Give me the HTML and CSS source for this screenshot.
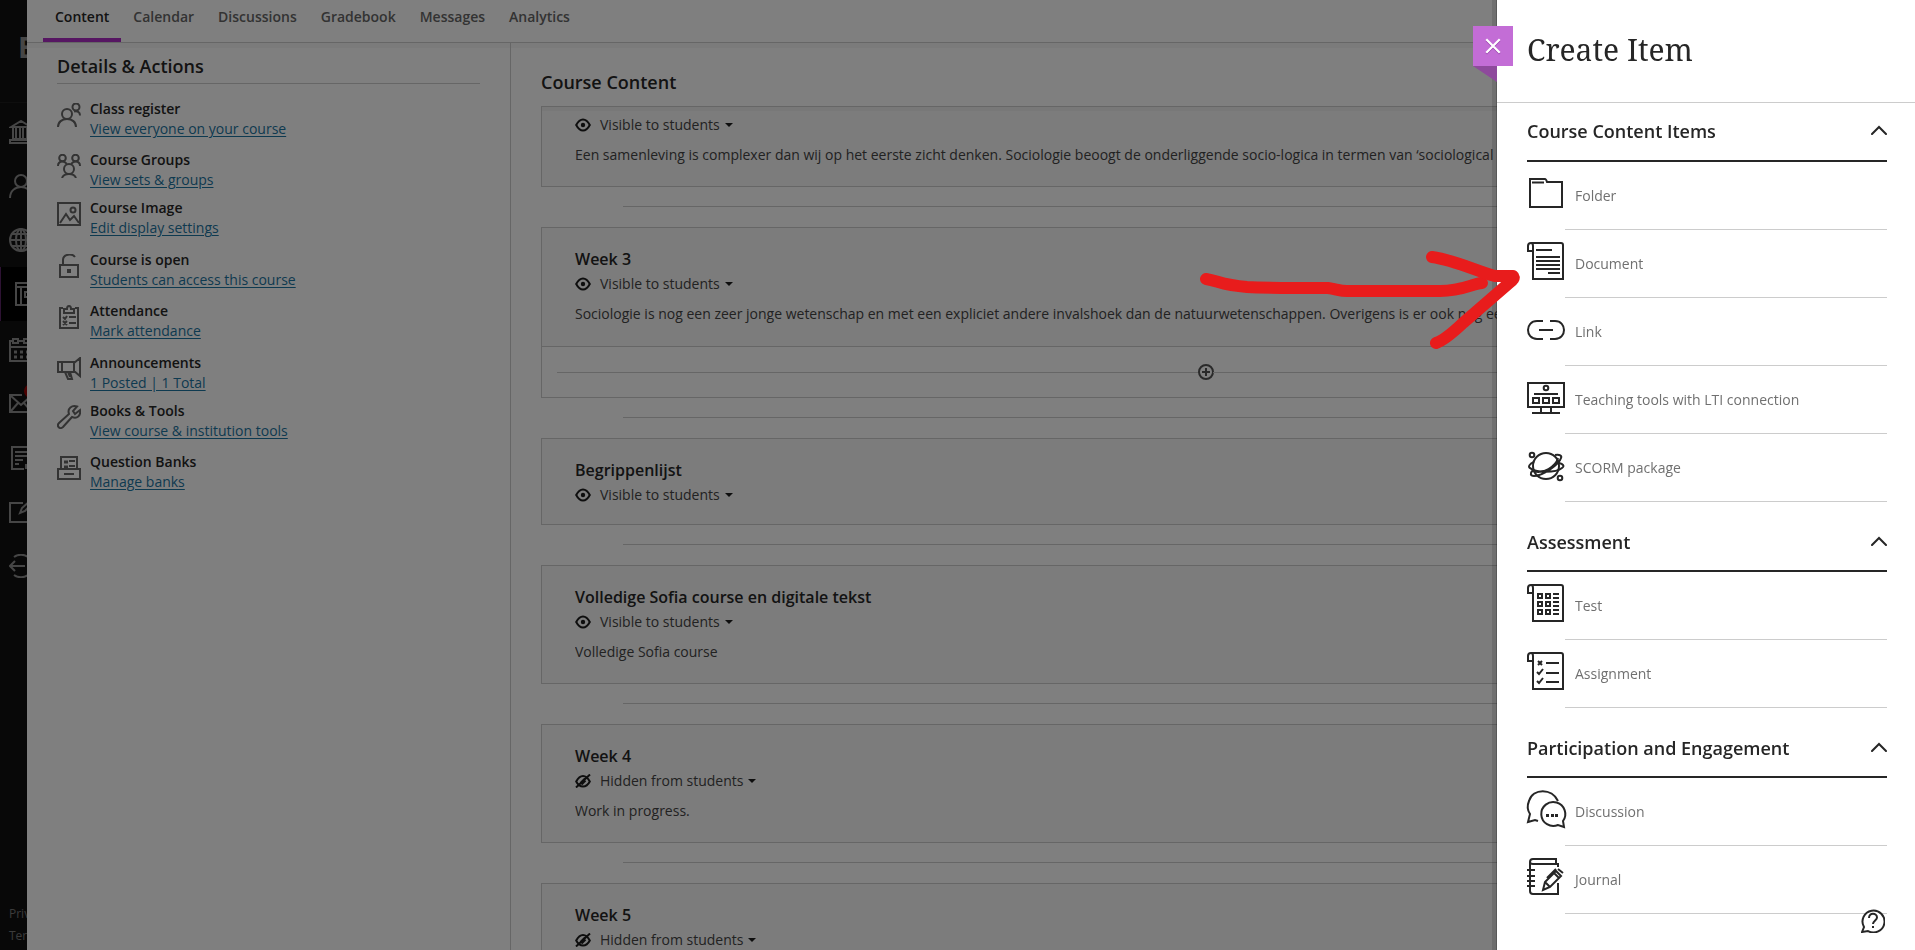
FILE: index.html
```html
<!DOCTYPE html>
<html lang="en">
	<head>
		<meta charset="utf-8">
		<title>Course Content</title>
		<link rel="stylesheet" href="styles.css">
	</head>
	<body>
		<!-- shapes that are used more than once -->
		<svg class="defs" aria-hidden="true">
			<symbol id="eye" viewBox="0 0 16 14">
				<path d="M1.2 7C3 3.600 5.300 1.500 8 1.500S13 3.600 14.800 7C13 10.400 10.700 12.500 8 12.500S3 10.400 1.200 7z" fill="none" stroke="currentColor" stroke-width="2"/>
				<circle cx="8" cy="7" r="2.200" fill="currentColor"/>
			</symbol>
			<symbol id="eye-off" viewBox="0 0 16 14">
				<path d="M1.2 7.500C3 4.100 5.300 2 8 2S13 4.100 14.800 7.500C13 10.900 10.700 12.500 8 12.500S3 10.900 1.200 7.500z" fill="none" stroke="currentColor" stroke-width="2"/>
				<path d="M5.500 9l4.500-4.500M6.500 10.500l4-4M1 13.500L15 .5" fill="none" stroke="currentColor" stroke-width="2"/>
			</symbol>
			<symbol id="caret" viewBox="0 0 8 4">
				<path d="M0 0h8L4 4z" fill="currentColor"/>
			</symbol>
			<symbol id="up" viewBox="0 0 16 10">
				<path d="M1 9l7-7 7 7" fill="none" stroke="currentColor" stroke-width="2" stroke-linecap="round"/>
			</symbol>
			<symbol id="scroll" viewBox="0 0 38 38">
				<path d="M6 9V37H36V3Q36 1 34 1H4Q1 1 1 4V9H6V4Q6 1 4 1"/>
			</symbol>
		</svg>

		<nav class="rail" aria-label="Main">
			<div class="logo">B</div>
			<ul>
				<li><a href="#" aria-label="Institution"><svg viewBox="0 0 24 24"><path d="M2 7L12 1l10 6zM4 8v11M7 8v11M11 8v11M14 8v11M18 8v11M21 8v11M3 19h18M1 23h22v-3H1z"/></svg></a></li>
				<li><a href="#" aria-label="Profile"><svg viewBox="0 0 24 24"><circle cx="12" cy="7" r="6"/><path d="M1 24c0-7 5-11 11-11s11 4 11 11"/></svg></a></li>
				<li><a href="#" aria-label="Activity"><svg viewBox="0 0 24 24"><circle cx="12" cy="12" r="11"/><ellipse cx="12" cy="12" rx="5" ry="11"/><path d="M12 1v22M1 12h22M3 6h18M3 18h18"/></svg></a></li>
				<li class="current"><a href="#" aria-label="Courses"><svg viewBox="0 0 24 24"><path d="M1 1h22v22H1zM1 5h22M6 5v18M10 10h9v5h-9z"/></svg></a></li>
				<li><a href="#" aria-label="Calendar"><svg viewBox="0 0 24 24"><path d="M4 3H1v20h22V3h-3M9 3h6M4 1h5v4H4zM15 1h5v4h-5zM1 9h22"/><path class="dots" d="M5 14h3M11 14h3M17 14h3M5 19h3M11 19h3M17 19h3"/></svg></a></li>
				<li><a href="#" aria-label="Messages"><svg viewBox="0 0 24 24"><path d="M13 3H1v17h22V9M2 4l10 9L22 4M2 19l7-8M22 19l-7-8"/></svg><i class="badge"></i></a></li>
				<li><a href="#" aria-label="Grades"><svg viewBox="0 0 24 24"><path d="M15 23H3V1h18v11M6 6h12M6 10h12M6 14h8M6 18h4M17 23v-4h6"/></svg></a></li>
				<li><a href="#" aria-label="Tools"><svg viewBox="0 0 24 24"><path d="M14 3H1v19h21V12M11 13l2-5 8-7 2 2-7 8z"/></svg></a></li>
				<li><a href="#" aria-label="Sign Out"><svg viewBox="0 0 24 24"><path d="M1 12h15M6 7l-5 5 5 5M5 3c4-3 10-3 14 0M5 21c4 3 10 3 14 0"/></svg></a></li>
			</ul>
			<div class="legal">
				<a href="#">Privacy</a>
				<a href="#">Terms</a>
			</div>
		</nav>

		<div class="page">
			<nav class="tabs" aria-label="Course">
				<a href="#" class="active">Content</a>
				<a href="#">Calendar</a>
				<a href="#">Discussions</a>
				<a href="#">Gradebook</a>
				<a href="#">Messages</a>
				<a href="#">Analytics</a>
			</nav>

			<div class="columns">
				<aside class="details">
					<h2>Details &amp; Actions</h2>
					<ul>
						<li>
							<svg viewBox="0 0 24 24"><circle cx="10" cy="11" r="5"/><path d="M1 24c0-5 4-8 9-8s9 3 9 8"/><circle cx="19" cy="4" r="3.500"/><path d="M17 8.500c3.500-1 6 .5 6 4"/></svg>
							<div><h3>Class register</h3><a href="#">View everyone on your course</a></div>
						</li>
						<li class="tight">
							<svg viewBox="0 0 24 24"><circle cx="5.500" cy="4" r="3.300"/><circle cx="18.500" cy="4" r="3.300"/><circle cx="12" cy="15" r="5"/><path d="M1 12c0-3 2-4.500 4.500-4.500S9 9 10 10M23 12c0-3-2-4.500-4.500-4.500S15 9 14 10M5 24c1-3 4-4 7-4s6 1 7 4"/></svg>
							<div><h3>Course Groups</h3><a href="#">View sets &amp; groups</a></div>
						</li>
						<li class="roomy">
							<svg viewBox="0 0 24 24"><path d="M1 1h22v22H1zM3 21l6-9 4 6 4-4 5 7"/><circle cx="16" cy="8" r="2.500"/></svg>
							<div><h3>Course Image</h3><a href="#">Edit display settings</a></div>
						</li>
						<li>
							<svg viewBox="0 0 24 24"><path d="M3 11h18v12H3zM6 11V6c0-6 9-7 12-3"/><path d="M12 15v4" class="thick"/></svg>
							<div><h3>Course is open</h3><a href="#">Students can access this course</a></div>
						</li>
						<li class="roomy">
							<svg viewBox="0 0 24 24"><path d="M6 3H3v20h18V3h-3M7 8V4h3c0-4 4-4 4 0h3v4zM6 12l2 2 2-3M12 12h7M6 16l4 4M10 16l-4 4M12 18h7"/></svg>
							<div><h3>Attendance</h3><a href="#">Mark attendance</a></div>
						</li>
						<li class="tight">
							<svg viewBox="0 0 24 24"><path d="M1 5h16v10H1zM5 5v10M17 6l6-5v18l-6-5M8 15l3 7h4l-2-7M11 15l2 5"/></svg>
							<div><h3>Announcements</h3><a href="#">1 Posted | 1 Total</a></div>
						</li>
						<li>
							<svg viewBox="0 0 24 24"><path d="M2 18L12 9C10 3 15 0 20 1.500L16 6l2 3 5-4c1 6-3 9-8 7L6 22c-3 3-7-1-4-4z"/></svg>
							<div><h3>Books &amp; Tools</h3><a href="#">View course &amp; institution tools</a></div>
						</li>
						<li>
							<svg viewBox="0 0 24 24"><path d="M1 13h22v10H1zM4 13V1h16v12M12 5h6M12 10h6M7 18h10"/><path class="dots" d="M7 6h4M7 11h4"/></svg>
							<div><h3>Question Banks</h3><a href="#">Manage banks</a></div>
						</li>
					</ul>
				</aside>

				<main class="content">
					<h2>Course Content</h2>
					<div class="list">
						<article class="card scrolled">
							<button class="status" type="button"><svg><use href="#eye"/></svg>Visible to students<svg class="caret"><use href="#caret"/></svg></button>
							<p>Een samenleving is complexer dan wij op het eerste zicht denken. Sociologie beoogt de onderliggende socio-logica in termen van ‘sociological</p>
						</article>
						<hr>
						<article class="card folder">
							<h3>Week 3</h3>
							<button class="status" type="button"><svg><use href="#eye"/></svg>Visible to students<svg class="caret"><use href="#caret"/></svg></button>
							<p>Sociologie is nog een zeer jonge wetenschap en met een expliciet andere invalshoek dan de natuurwetenschappen. Overigens is er ook nog een</p>
							<div class="insert">
								<button type="button" aria-label="Add content"><svg viewBox="0 0 16 16"><circle cx="8" cy="8" r="7"/><path d="M8 4v8M4 8h8"/></svg></button>
							</div>
						</article>
						<hr>
						<article class="card">
							<h3>Begrippenlijst</h3>
							<button class="status" type="button"><svg><use href="#eye"/></svg>Visible to students<svg class="caret"><use href="#caret"/></svg></button>
						</article>
						<hr>
						<article class="card">
							<h3>Volledige Sofia course en digitale tekst</h3>
							<button class="status" type="button"><svg><use href="#eye"/></svg>Visible to students<svg class="caret"><use href="#caret"/></svg></button>
							<p>Volledige Sofia course</p>
						</article>
						<hr>
						<article class="card">
							<h3>Week 4</h3>
							<button class="status" type="button"><svg><use href="#eye-off"/></svg>Hidden from students<svg class="caret"><use href="#caret"/></svg></button>
							<p>Work in progress.</p>
						</article>
						<hr>
						<article class="card">
							<h3>Week 5</h3>
							<button class="status" type="button"><svg><use href="#eye-off"/></svg>Hidden from students<svg class="caret"><use href="#caret"/></svg></button>
						</article>
					</div>
				</main>
			</div>
		</div>

		<div class="overlay"></div>

		<section class="panel" aria-label="Create Item">
			<button class="close" type="button" aria-label="Close"><svg viewBox="0 0 16 16"><path d="M2 2l12 12M14 2L2 14"/></svg></button>
			<header><h1>Create Item</h1></header>

			<div class="group">
				<h2><button type="button">Course Content Items<svg><use href="#up"/></svg></button></h2>
				<ul>
					<li><a href="#"><svg viewBox="0 0 38 38"><path d="M3 5H18Q19 5 20 8H35V33H3zM5 8.500H17"/></svg><span>Folder</span></a></li>
					<li><a href="#"><svg viewBox="0 0 38 38"><use href="#scroll"/><path d="M9 8H25M9 15H33M9 19H33M9 23H33M9 27H33M21 31H33"/></svg><span>Document</span></a></li>
					<li><a href="#"><svg viewBox="0 0 38 38"><path d="M16 11H10C-2 11-2 29 10 29H16M23 11H28C40 11 40 29 28 29H23M12 20H26"/></svg><span>Link</span></a></li>
					<li><a href="#"><svg viewBox="0 0 38 38"><path d="M1 5H37V29H1zM7 16H31M6 20H12V25H6zM16 20H22V25H16zM26 20H32V25H26zM14 29V35M24 29V35M5 35H33"/><circle cx="19" cy="10" r="2.300"/></svg><span>Teaching tools with LTI connection</span></a></li>
					<li><a href="#"><svg viewBox="0 0 38 38"><circle cx="19" cy="20" r="13"/><circle cx="5" cy="9" r="2.300"/><circle cx="33" cy="32" r="2.300"/><path d="M7 16C2 18 1 21 3 22C8 27 29 27 35 22C38 20 36 18 32 17M28 9C33 8 35 10 34 12C32 19 15 30 7 30C3 30 3 27 6 24M6 25C16 29 29 20 31 12"/></svg><span>SCORM package</span></a></li>
				</ul>
			</div>

			<div class="group">
				<h2><button type="button">Assessment<svg><use href="#up"/></svg></button></h2>
				<ul>
					<li><a href="#"><svg viewBox="0 0 38 38"><use href="#scroll"/><path d="M11 10H15V14H11zM19 10H23V14H19zM11 18H15V22H11zM19 18H23V22H19zM11 26H15V30H11zM19 26H23V30H19zM26 10H32M26 14H32M26 18H32M26 22H32M26 26H32M26 30H32"/></svg><span>Test</span></a></li>
					<li><a href="#"><svg viewBox="0 0 38 38"><use href="#scroll"/><path d="M11 9L15 13M15 9L11 13M10 20L12 22 16 17M10 29L12 31 16 26M19 11H32M19 21H32M19 30H32"/></svg><span>Assignment</span></a></li>
				</ul>
			</div>

			<div class="group">
				<h2><button type="button">Participation and Engagement<svg><use href="#up"/></svg></button></h2>
				<ul>
					<li><a href="#"><svg viewBox="0 0 38 38"><path d="M31 11C25-2 6-2 2 11Q-1 18 3 24L1 32 8 30 11 31"/><path d="M36 31A12 12 0 1 0 31 35L37 37z"/><path class="dots" d="M19 25.500h3M24 25.500h3M28 25.500h3"/></svg><span>Discussion</span></a></li>
					<li><a href="#"><svg viewBox="0 0 38 38"><path d="M31 7V9M29 6V1H6Q3 1 3 4V33Q3 36 6 36H31V25M3 4Q3 6 6 6H31V9M0 12H8M0 18H8M0 23H8M0 28H8"/><path d="M16 32L18 24 29 13 34 18 23 29zM18 24L23 29M27 15L32 20M20 20L29 11M31 11L36 15"/></svg><span>Journal</span></a></li>
				</ul>
			</div>
		</section>

		<button class="help" type="button" aria-label="Help"><svg viewBox="0 0 24 24"><path class="bubble" d="M1 23L3 18A11 11 0 1 1 7 22z"/><path d="M8 9C8 3 16 4 16 8.500C16 11 12 12 12 15M12 17V19"/></svg></button>

		<svg class="arrow" viewBox="1200 245 320 110" aria-hidden="true">
			<path d="M1206 279C1219 281 1221 285 1247 287C1267 288 1300 288 1328 288C1336 289 1340 291 1347 291H1440C1463 291 1471 284 1482 283"/>
			<path d="M1432 257C1454 260 1477 271 1495 276H1513Q1516 278 1508 284L1463 323Q1445 340 1436 343"/>
		</svg>
	</body>
</html>
```

FILE: styles.css
```css
* {
	box-sizing: border-box;
}

body {
	margin: 0;
	height: 100vh;
	display: flex;
	overflow: hidden;
	background: #fff;
	color: #262626;
	font-family: "Open Sans", "Noto Sans", sans-serif;
	font-size: 14px;
	line-height: 20px;
}

h1, h2, h3, p, ul {
	margin: 0;
	padding: 0;
}

ul {
	list-style: none;
}

button {
	padding: 0;
	border: 0;
	background: none;
	color: inherit;
	font: inherit;
}

svg {
	flex: none;
	fill: none;
	stroke: currentColor;
	stroke-width: 2;
}

symbol {
	overflow: visible;
}

.defs {
	display: none;
}

.dots {
	stroke-width: 3;
}

.thick {
	stroke-width: 4;
}

/* left rail */
.rail {
	width: 27px;
	flex: none;
	display: flex;
	flex-direction: column;
	overflow: hidden;
	background: #111;
	color: #8c8c8c;
}

.logo {
	height: 103px;
	flex: none;
	padding: 27px 0 0 18px;
	border-bottom: 1px solid #1c1c1c;
	font-size: 28px;
	font-weight: 700;
	line-height: 40px;
}

.rail ul {
	padding-top: 2px;
}

.rail li a {
	display: flex;
	align-items: center;
	width: 60px;
	height: 54px;
	padding-left: 9px;
	color: inherit;
	position: relative;
}

.rail li svg {
	width: 24px;
	height: 24px;
	stroke-width: 2;
}

.rail .current {
	margin-bottom: 2px;
	background: #000;
	border-left: 1px solid #5b2467;
}

.rail .current a {
	padding-left: 14px;
}

.badge {
	position: absolute;
	left: 24px;
	top: 7px;
	width: 14px;
	height: 14px;
	border-radius: 50%;
	background: #900;
}

.legal {
	margin-top: auto;
	padding: 0 0 3px 9px;
}

.legal a {
	display: block;
	color: #777;
	font-size: 12px;
	line-height: 22px;
	text-decoration: none;
}

/* course page */
.page {
	flex: 1;
	min-width: 0;
	display: flex;
	flex-direction: column;
}

.tabs {
	display: flex;
	flex: none;
	height: 43px;
	padding-left: 16px;
	border-bottom: 1px solid #ccc;
	box-shadow: 0 5px 0 #f6f6f6;
}

.tabs a {
	padding: 7px 12px 0;
	color: #666;
	font-weight: 600;
	text-decoration: none;
}

.tabs .active {
	color: #262626;
	border-bottom: 4px solid #ac2cc4;
}

.columns {
	flex: 1;
	min-height: 0;
	display: flex;
}

h2 {
	font-size: 18px;
	font-weight: 600;
	line-height: 24px;
}

.details {
	width: 484px;
	flex: none;
	padding: 11px 30px 0;
	border-right: 1px solid #ccc;
}

.details h2 {
	padding-bottom: 5px;
	border-bottom: 1px solid #ccc;
}

.details ul {
	padding-top: 15px;
}

.details li {
	display: flex;
	gap: 9px;
	margin-bottom: 11px;
}

.details .tight {
	margin-bottom: 8px;
}

.details .roomy {
	margin-bottom: 12px;
}

.details svg {
	width: 24px;
	height: 24px;
	margin-top: 4px;
	color: #666;
}

.details h3 {
	font-size: 14px;
	font-weight: 600;
	line-height: 20px;
}

.details li a {
	display: block;
	color: #1c74a0;
	text-underline-offset: 2px;
}

.content {
	flex: 1;
	min-width: 0;
	padding: 27px 44px 0 30px;
}

.content h2 {
	padding-bottom: 12px;
}

.list {
	border-top: 1px solid #ccc;
}

.card {
	padding: 19px 33px 17px;
	border: 1px solid #ccc;
	background: #f8f8f8;
}

.card.scrolled {
	padding-top: 5px;
	border-top: 0;
	box-shadow: inset 0 4px 0 #f0f0f0;
}

.card h3 {
	font-size: 16px;
	font-weight: 600;
	line-height: 24px;
}

.card p {
	margin: 7px 0 3px;
	color: #444;
	line-height: 22px;
	white-space: nowrap;
	overflow: hidden;
}

.status {
	display: flex;
	align-items: center;
	height: 25px;
	color: #444;
}

.status svg {
	width: 16px;
	height: 14px;
	margin-right: 9px;
	color: #1c1c1c;
	stroke: none;
}

.status .caret {
	width: 8px;
	height: 4px;
	margin-left: 5px;
}

.list hr {
	margin: 19px 82px 20px;
	border: 0;
	border-top: 1px solid #ccc;
}

.card.folder {
	padding-bottom: 0;
}

.insert {
	display: flex;
	align-items: center;
	height: 51px;
	margin: 21px -33px 0;
	padding: 0 15px;
	border-top: 1px solid #ccc;
	background: #fff;
}

.insert::before, .insert::after {
	content: "";
	flex: 1;
	border-top: 1px solid #ccc;
}

.insert button {
	display: flex;
	margin: 0 -1px;
	color: #555;
}

.insert svg {
	width: 16px;
	height: 16px;
}

.overlay {
	position: fixed;
	inset: 0;
	background: rgba(0, 0, 0, 0.5);
}

/* create item panel */
.panel {
	position: fixed;
	top: 0;
	right: 0;
	bottom: 0;
	width: 418px;
	background: #fff;
	box-shadow: 0 0 0 1px rgba(0, 0, 0, 0.2), 0 0 0 5px rgba(0, 0, 0, 0.12);
}

.panel header {
	padding: 30px 30px 32px;
	border-bottom: 1px solid #ccc;
}

.panel h1 {
	font-family: "Noto Serif", "DejaVu Serif", serif;
	font-size: 30px;
	font-weight: 400;
	line-height: 40px;
}

.close {
	position: absolute;
	left: -24px;
	top: 26px;
	display: flex;
	align-items: center;
	justify-content: center;
	width: 40px;
	height: 40px;
	background: #c36dd6;
	color: #fff;
}

.close svg {
	width: 18px;
	height: 18px;
	filter: drop-shadow(0 1px 0 #9a45ad);
}

.close::after {
	content: "";
	position: absolute;
	left: 0;
	top: 40px;
	border-top: 16px solid #8e4a9c;
	border-left: 24px solid transparent;
}

.group {
	padding: 0 28px 0 30px;
}

.group h2 button {
	display: flex;
	align-items: center;
	justify-content: space-between;
	width: 100%;
	height: 70px;
	padding-top: 11px;
	border-bottom: 2px solid #262626;
}

.group:nth-of-type(1) h2 button {
	height: 59px;
	padding-top: 0;
	padding-bottom: 2px;
}

.group h2 svg {
	width: 16px;
	height: 10px;
	margin-bottom: 2px;
}

.group li a {
	display: flex;
	align-items: flex-start;
	color: #262626;
	text-decoration: none;
}

.group li svg {
	width: 38px;
	height: 38px;
	margin-top: 12px;
	overflow: visible;
}

.group li span {
	flex: 1;
	height: 68px;
	padding-left: 10px;
	border-bottom: 1px solid #ccc;
	color: #707070;
	line-height: 68px;
}

.help {
	position: fixed;
	right: 30px;
	bottom: 17px;
	display: flex;
}

.help svg {
	width: 24px;
	height: 24px;
}

.bubble {
	fill: #fff;
}

.arrow {
	position: fixed;
	right: 395px;
	top: 245px;
	width: 320px;
	height: 110px;
	color: #e81c1c;
	stroke-width: 12;
	stroke-linecap: round;
	stroke-linejoin: round;
}
```
